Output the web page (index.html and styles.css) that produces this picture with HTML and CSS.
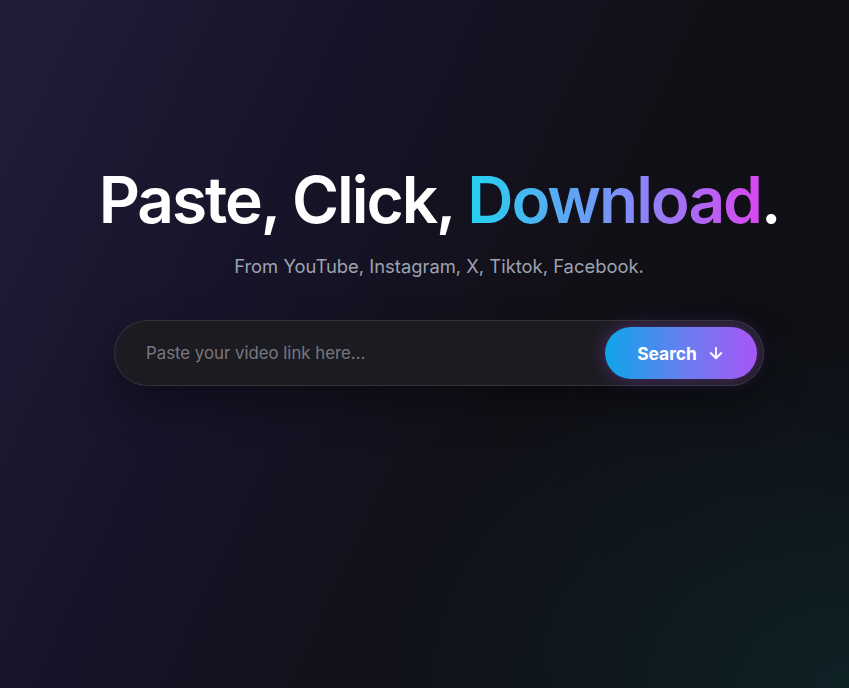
FILE: index.html
```html
<!DOCTYPE html>
<html lang="en">
<head>
<meta charset="utf-8">
<title>Paste, Click, Download.</title>
<link rel="stylesheet" href="styles.css">
</head>
<body>
<main class="hero">
  <h1 class="title">Paste, Click, <span class="grad">Download</span>.</h1>
  <p class="subtitle">From YouTube, Instagram, X, Tiktok, Facebook.</p>
  <form class="search" onsubmit="return false">
    <input class="search-input" type="text" placeholder="Paste your video link here...">
    <button class="search-btn" type="submit">
      <span>Search</span>
      <svg class="arrow" width="18" height="18" viewBox="0 0 24 24" fill="none" stroke="currentColor" stroke-width="2.4" stroke-linecap="round" stroke-linejoin="round"><path d="M12 5v14"/><path d="M19 12l-7 7-7-7"/></svg>
    </button>
  </form>
</main>
</body>
</html>
```
FILE: styles.css
```css
* { box-sizing: border-box; }
html, body { height: 100%; }
body {
  margin: 0;
  font-family: Inter, "Noto Sans", sans-serif;
  color: #fff;
  background-color: #111017;
  background-image:
    radial-gradient(ellipse 60% 55% at 100% 100%, rgba(14, 40, 44, 0.75), rgba(14, 40, 44, 0) 100%),
    linear-gradient(115deg, #231c38 0%, #17142a 30%, #111017 60%, #0d0d12 100%);
  min-height: 688px;
  overflow: hidden;
}
.hero {
  display: flex;
  flex-direction: column;
  align-items: center;
  padding: 162px 0 0 29px;
}
.title {
  margin: 0;
  font-size: 64px;
  font-weight: 600;
  letter-spacing: -0.032em;
  line-height: 76px;
  white-space: nowrap;
}
.grad {
  background: linear-gradient(90deg, #22d3ee 0%, #818cf8 55%, #d946ef 100%);
  -webkit-background-clip: text;
  background-clip: text;
  color: transparent;
}
.subtitle {
  margin: 14px 0 0;
  font-size: 18.4px;
  color: #9ca3af;
  line-height: 28px;
}
.search {
  margin-top: 40px;
  width: 650px;
  height: 66px;
  display: flex;
  align-items: center;
  padding: 0 6px 0 29px;
  border-radius: 33px;
  background: #1c1b21;
  border: 1px solid rgba(255, 255, 255, 0.1);
  box-shadow: 0 20px 40px rgba(0, 0, 0, 0.35);
}
.search-input {
  flex: 1;
  min-width: 0;
  background: transparent;
  border: 0;
  outline: none;
  font-family: inherit;
  font-size: 16.8px;
  color: #fff;
}
.search-input::placeholder { color: #78777f; }
.search-btn {
  width: 152px;
  height: 52px;
  border: 0;
  border-radius: 26px;
  display: flex;
  align-items: center;
  justify-content: center;
  gap: 10px;
  font-family: inherit;
  font-size: 17.4px;
  font-weight: 700;
  color: #fff;
  background: linear-gradient(90deg, #0ea5e9 0%, #6d7cf0 55%, #a855f7 100%);
  box-shadow: 0 0 18px rgba(168, 85, 247, 0.35);
  cursor: pointer;
}
.arrow { display: block; }
```
